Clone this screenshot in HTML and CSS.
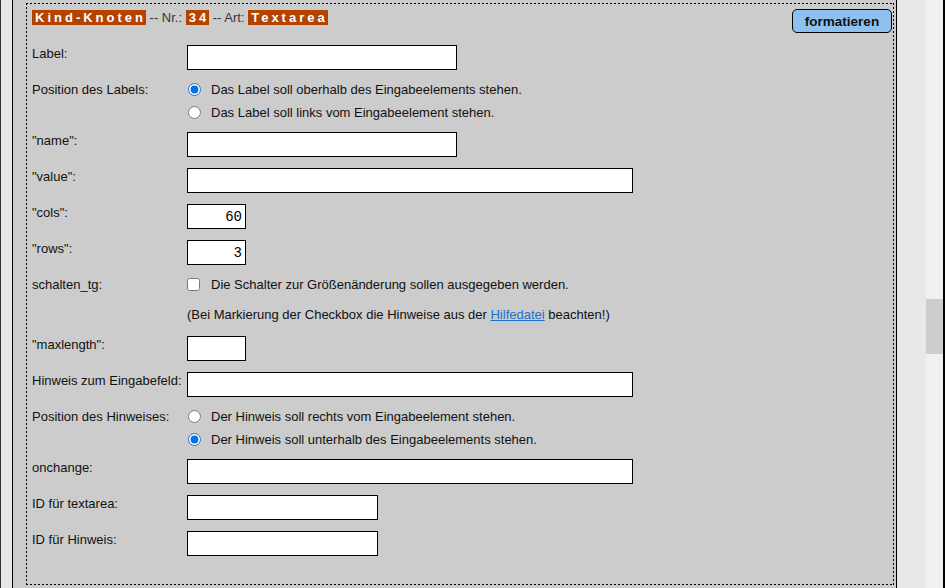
FILE: index.html
```html
<!DOCTYPE html>
<html lang="de">
<head>
  <meta charset="UTF-8">
  <title>Kind-Knoten Textarea</title>
  <link rel="stylesheet" href="styles.css">
</head>
<body>
  <div class="page">
    <div class="panel">
      <div class="node">
        <div class="node-head">
          <div class="node-title">
            <span class="badge">Kind-Knoten</span> -- Nr.: <span class="badge">34</span> -- Art: <span class="badge">Textarea</span>
          </div>
          <button type="button" class="btn-format">formatieren</button>
        </div>

        <form class="node-form">
          <label class="lbl">Label:</label>
          <div class="fld"><input type="text" class="w-md"></div>

          <label class="lbl">Position des Labels:</label>
          <div class="fld options">
            <label class="opt"><input type="radio" name="lblpos" checked> Das Label soll oberhalb des Eingabeelements stehen.</label>
            <label class="opt"><input type="radio" name="lblpos"> Das Label soll links vom Eingabeelement stehen.</label>
          </div>

          <label class="lbl">"name":</label>
          <div class="fld"><input type="text" class="w-md"></div>

          <label class="lbl">"value":</label>
          <div class="fld"><input type="text" class="w-lg"></div>

          <label class="lbl">"cols":</label>
          <div class="fld"><input type="text" class="w-xs num" value="60"></div>

          <label class="lbl">"rows":</label>
          <div class="fld"><input type="text" class="w-xs num" value="3"></div>

          <label class="lbl">schalten_tg:</label>
          <div class="fld check">
            <label class="opt"><input type="checkbox"> Die Schalter zur Größenänderung sollen ausgegeben werden.</label>
          </div>

          <div class="lbl"></div>
          <div class="fld note">(Bei Markierung der Checkbox die Hinweise aus der <a href="#">Hilfedatei</a> beachten!)</div>

          <label class="lbl">"maxlength":</label>
          <div class="fld"><input type="text" class="w-xs"></div>

          <label class="lbl">Hinweis zum Eingabefeld:</label>
          <div class="fld"><input type="text" class="w-lg"></div>

          <label class="lbl">Position des Hinweises:</label>
          <div class="fld options">
            <label class="opt"><input type="radio" name="hintpos"> Der Hinweis soll rechts vom Eingabeelement stehen.</label>
            <label class="opt"><input type="radio" name="hintpos" checked> Der Hinweis soll unterhalb des Eingabeelements stehen.</label>
          </div>

          <label class="lbl">onchange:</label>
          <div class="fld"><input type="text" class="w-lg"></div>

          <label class="lbl">ID für textarea:</label>
          <div class="fld"><input type="text" class="w-sm"></div>

          <label class="lbl">ID für Hinweis:</label>
          <div class="fld"><input type="text" class="w-sm"></div>
        </form>
      </div>
    </div>
    <div class="gutter"></div>
    <div class="scrollbar"><div class="thumb"></div></div>
  </div>
</body>
</html>
```

FILE: styles.css
```css
html, body {
  margin: 0;
  height: 100%;
}

body {
  font-family: "Liberation Sans", Arial, sans-serif;
  font-size: 13px;
  color: #111;
  background-color: #e8e8e8;
  border-left: 1px solid #333;
  border-right: 2px solid #000;
  overflow: hidden;
}

.page {
  display: flex;
  height: 588px;
  padding-left: 11px;
}

.panel {
  width: 868px;
  background: #cccccc;
  border-left: 1px solid #000;
  border-right: 1px solid #000;
  padding: 3px 2px 0 13px;
}

.gutter {
  width: 29px;
}

.scrollbar {
  width: 17px;
  background: #f0f0f0;
}

.thumb {
  margin-top: 299px;
  height: 55px;
  background: #cdcdcd;
}

/* gepunkteter Rahmen */
.node {
  padding: 6px 2px 29px 6px;
  background:
    linear-gradient(to right, #000 50%, transparent 0) top left / 4px 1px repeat-x,
    linear-gradient(to right, #000 50%, transparent 0) bottom left / 4px 1px repeat-x,
    linear-gradient(#000 50%, transparent 0) top left / 1px 4px repeat-y,
    linear-gradient(#000 50%, transparent 0) top right / 1px 4px repeat-y;
}

.node-head {
  display: flex;
  justify-content: space-between;
  align-items: flex-start;
  height: 24px;
  margin-bottom: 12px;
}

.node-title {
  margin-top: 1px;
  line-height: 15px;
  color: #333;
}

.badge {
  display: inline-block;
  background: #b54300;
  color: #fff;
  font-weight: bold;
  letter-spacing: 3px;
  padding: 0 0 0 3px;
  line-height: 15px;
}

.btn-format {
  width: 100px;
  height: 24px;
  background: #8ec1f0;
  border: 1px solid #000;
  border-radius: 5px;
  font-family: "Liberation Sans", Arial, sans-serif;
  font-size: 13.5px;
  font-weight: bold;
  color: #111;
  padding: 0;
  cursor: pointer;
}

.node-form {
  display: grid;
  grid-template-columns: 155px 1fr;
  row-gap: 11px;
}

.lbl {
  padding-top: 1px;
  line-height: 15px;
}

.fld {
  display: flex;
  flex-direction: column;
  align-items: flex-start;
}

input[type="text"] {
  box-sizing: border-box;
  height: 25px;
  border: 1px solid #000;
  background: #fff;
  padding: 0 3px;
  font-family: "Liberation Mono", monospace;
  font-size: 14px;
  outline: none;
}

.w-xs { width: 59px; }
.w-sm { width: 191px; }
.w-md { width: 270px; }
.w-lg { width: 446px; }

.num {
  text-align: right;
}

.options {
  margin: -2px 0;
  gap: 2px;
}

.opt {
  display: flex;
  align-items: center;
  height: 21px;
  line-height: 15px;
}

.opt input {
  margin: 0 10px 0 1px;
  width: 13px;
  height: 13px;
  accent-color: #0a6ee0;
}

.check .opt {
  height: 16px;
}

.check .opt input {
  margin: 0 11px 0 0;
}

.note {
  padding: 4px 0 3px;
  line-height: 15px;
  display: block;
}

.note a {
  color: #1a6fd2;
}
```
